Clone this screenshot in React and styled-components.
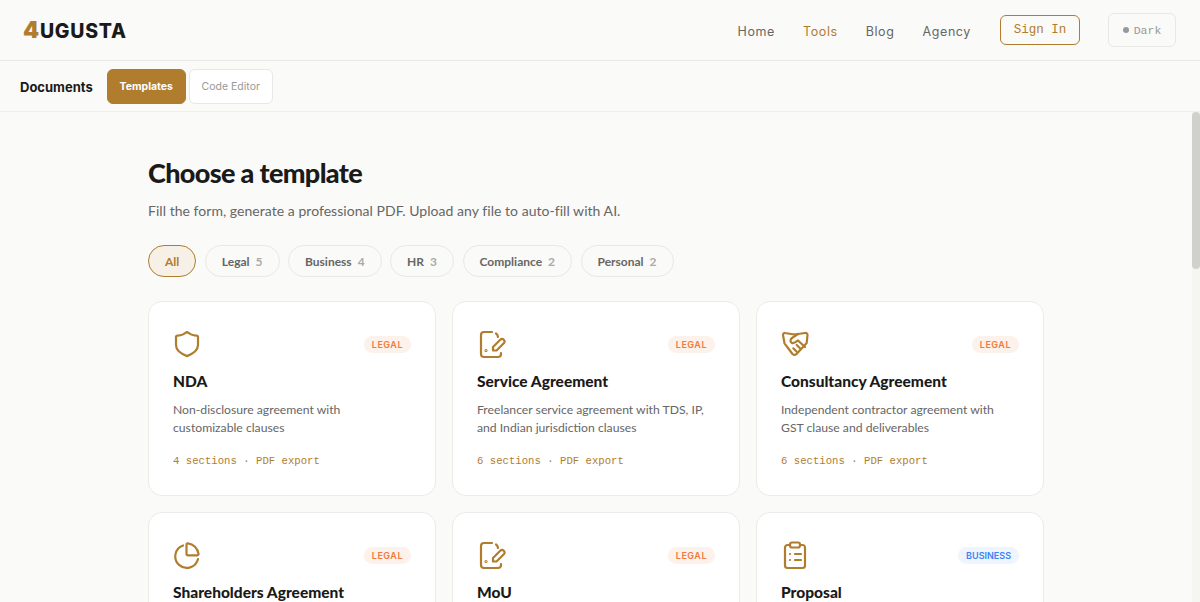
import styled, { createGlobalStyle } from "styled-components";

const accent = "#b07d2e";

const GlobalStyle = createGlobalStyle`
  html, body {
    margin: 0;
    height: 100%;
    overflow: hidden;
    background: #fafaf8;
  }
  * {
    box-sizing: border-box;
  }
`;

const Page = styled.div`
  height: 602px;
  display: flex;
  flex-direction: column;
  background: #fafaf8;
  color: #1a1a1a;
  font-family: "Lato", "Liberation Sans", sans-serif;
`;

const Header = styled.header`
  height: 61px;
  flex: none;
  display: flex;
  align-items: center;
  justify-content: space-between;
  padding: 0 24px;
  border-bottom: 1px solid #e8e8e4;
`;

const Logo = styled.div`
  font-family: "Inter", sans-serif;
  font-weight: 800;
  font-size: 19.5px;
  letter-spacing: 0.75px;
  color: #1a1a1a;
  margin-left: -1px;
  span {
    color: ${accent};
    font-size: 23px;
    font-weight: 900;
  }
`;

const Nav = styled.nav`
  display: flex;
  align-items: center;
`;

const NavLink = styled.a`
  font-family: "Inter", sans-serif;
  font-size: 12.5px;
  letter-spacing: 0.6px;
  margin-right: 28px;
  padding-top: 2px;
  color: ${(p) => (p.$active ? accent : "#666")};
`;

const SignIn = styled.button`
  width: 80px;
  height: 30px;
  margin-left: 1px;
  border: 1px solid ${accent};
  border-radius: 6px;
  background: transparent;
  color: ${accent};
  font-family: "Liberation Mono", monospace;
  font-size: 12.5px;
  padding: 0;
`;

const ThemeToggle = styled.button`
  width: 68px;
  height: 34px;
  margin-left: 28px;
  display: flex;
  align-items: center;
  justify-content: center;
  gap: 5px;
  border: 1px solid #e8e8e4;
  border-radius: 6px;
  background: transparent;
  color: #999;
  font-family: "Liberation Mono", monospace;
  font-size: 11.5px;
  padding: 0;
`;

const Dot = styled.i`
  width: 6px;
  height: 6px;
  border-radius: 50%;
  background: #999;
`;

const SubBar = styled.div`
  height: 51px;
  flex: none;
  display: flex;
  align-items: center;
  padding: 0 20px;
  border-bottom: 1px solid #eeeeea;
`;

const SubTitle = styled.div`
  font-family: "Inter", sans-serif;
  font-weight: 700;
  font-size: 13px;
  margin-right: 14px;
  padding-top: 2px;
`;

const Tab = styled.button`
  height: 35px;
  padding: 0;
  width: ${(p) => (p.$active ? "79px" : "84px")};
  margin-right: 3px;
  border-radius: 6px;
  font-family: "Inter", sans-serif;
  font-size: 10.5px;
  font-weight: ${(p) => (p.$active ? 700 : 400)};
  color: ${(p) => (p.$active ? "#fff" : "#999")};
  background: ${(p) => (p.$active ? accent : "#fff")};
  border: 1px solid ${(p) => (p.$active ? accent : "#e8e8e4")};
`;

const Body = styled.div`
  flex: 1;
  min-height: 0;
  display: flex;
`;

const Scroller = styled.main`
  flex: 1;
  overflow: hidden;
`;

const ScrollTrack = styled.div`
  width: 8px;
  flex: none;
  background: #f5f5f2;
`;

const ScrollThumb = styled.div`
  height: 157px;
  background: #d0d0cc;
  border-radius: 4px;
`;

const Content = styled.div`
  width: 896px;
  margin: 0 auto;
  padding-top: 43px;
`;

const Title = styled.h1`
  margin: 0;
  font-size: 27px;
  line-height: 36px;
  font-weight: 900;
  letter-spacing: -0.65px;
  color: #1a1a1a;
`;

const Lead = styled.p`
  margin: 10px 0 0;
  font-size: 14px;
  line-height: 20px;
  letter-spacing: 0.04px;
  color: #666;
`;

const Filters = styled.div`
  display: flex;
  gap: 8.5px;
  margin-top: 24px;
`;

const Chip = styled.button`
  height: 32px;
  padding: 0 16px;
  border-radius: 16px;
  font-family: "Lato", sans-serif;
  font-size: 12px;
  font-weight: 700;
  color: ${(p) => (p.$active ? accent : "#666")};
  background: ${(p) => (p.$active ? "#f6f0e6" : "#fafaf8")};
  border: 1px solid ${(p) => (p.$active ? accent : "#e8e8e4")};
  b {
    margin-left: 6px;
    font-weight: 700;
    color: #aaa;
  }
`;

const Grid = styled.div`
  display: grid;
  grid-template-columns: repeat(3, 288px);
  gap: 16px;
  margin-top: 24px;
`;

const Card = styled.article`
  height: 195px;
  padding: 24px;
  background: #fff;
  border: 1px solid #ebebe7;
  border-radius: 14px;
`;

const CardTop = styled.div`
  display: flex;
  align-items: center;
  justify-content: space-between;
  height: 36px;
`;

const IconWrap = styled.div`
  width: 30px;
  height: 30px;
  margin-left: -1px;
  color: ${accent};
`;

const Badge = styled.span`
  height: 17px;
  padding: 0 8px;
  display: flex;
  align-items: center;
  border-radius: 9px;
  font-family: "Inter", sans-serif;
  font-size: 9px;
  font-weight: 600;
  letter-spacing: ${(p) => (p.$kind === "BUSINESS" ? "0" : "0.5px")};
  color: ${(p) => (p.$kind === "BUSINESS" ? "#3b82f6" : "#f07a3a")};
  background: ${(p) => (p.$kind === "BUSINESS" ? "#eef5fe" : "#fdf1ec")};
`;

const CardTitle = styled.h3`
  margin: 9px 0 0;
  font-size: 15.5px;
  line-height: 20px;
  font-weight: 900;
  color: #1a1a1a;
`;

const CardText = styled.p`
  margin: 10px 0 0;
  font-size: 12.2px;
  line-height: 18px;
  color: #666;
`;

const Meta = styled.div`
  margin-top: 17px;
  font-family: "Liberation Mono", monospace;
  font-size: 10.65px;
  line-height: 14px;
  color: ${accent};
`;

const Svg = ({ children }) => (
  <svg
    width="30"
    height="30"
    viewBox="0 0 30 30"
    fill="none"
    stroke="currentColor"
    strokeWidth="2.2"
    strokeLinecap="round"
    strokeLinejoin="round"
  >
    {children}
  </svg>
);

const ShieldIcon = () => (
  <Svg>
    <path d="M15 3l4 2.4c1.6.9 3.4 1.3 5.5 1.3.8 0 1.5.6 1.5 1.4v8c0 5-4.5 8.5-11 11-6.5-2.5-11-6-11-11v-8c0-.8.7-1.4 1.5-1.4 2.1 0 3.9-.4 5.5-1.3z" />
  </Svg>
);

const DocPenIcon = () => (
  <Svg>
    <path d="M16 3H8a3 3 0 0 0-3 3v19a3 3 0 0 0 3 3h14a3 3 0 0 0 3-3v-1" />
    <path d="M20 4.5c1.2.8 1.8 1.8 2 3.5" />
    <path d="M17 21.5V18l7.5-7.5a2.5 2.5 0 0 1 3.5 3.5l-7.5 7.5z" />
    <circle cx="10" cy="21.5" r=".5" />
  </Svg>
);

const HandshakeIcon = () => (
  <Svg>
    <path d="M5 4l6 1c2 .4 4 .4 7 0l7-1c1.5-.2 2.5.5 2.5 2l-.8 8L17 24.5c-1.5 1.8-3 1.8-4.500.5L4.500 14.300 3 6C3 4.800 4 3.800 5 4z" />
    <path d="M18 5l-6 4c-2 1.500-2 4 0 5 2 .8 4-1 6-2.500l7 6.500" />
    <path d="M13.300 19.300l3.400 3.400M16.700 16l3.300 3.300" />
  </Svg>
);

const PieIcon = () => (
  <Svg>
    <path d="M11 5.500A11.500 11.500 0 1 0 26 19" />
    <path d="M14.500 4.500c0-.8.6-1.300 1.400-1.200 5.600.7 9.800 5 10.600 10.600.1.800-.4 1.400-1.200 1.400h-9.300c-.8 0-1.500-.7-1.500-1.500z" />
  </Svg>
);

const ClipboardIcon = () => (
  <Svg>
    <rect x="10" y="2.500" width="10" height="5" rx="2" />
    <path d="M10 5H7.500A2.500 2.500 0 0 0 5 7.500v18A2.500 2.500 0 0 0 7.500 28h15a2.500 2.500 0 0 0 2.500-2.500v-18A2.500 2.500 0 0 0 22.500 5H20" />
    <path d="M15 14h6M15 20h6M10 14h.01M10 20h.01" />
  </Svg>
);

const filters = [
  { label: "All", active: true },
  { label: "Legal", count: 5 },
  { label: "Business", count: 4 },
  { label: "HR", count: 3 },
  { label: "Compliance", count: 2 },
  { label: "Personal", count: 2 },
];

const templates = [
  {
    title: "NDA",
    text: ["Non-disclosure agreement with", "customizable clauses"],
    sections: 4,
    kind: "LEGAL",
    icon: <ShieldIcon />,
  },
  {
    title: "Service Agreement",
    text: ["Freelancer service agreement with TDS, IP,", "and Indian jurisdiction clauses"],
    sections: 6,
    kind: "LEGAL",
    icon: <DocPenIcon />,
  },
  {
    title: "Consultancy Agreement",
    text: ["Independent contractor agreement with", "GST clause and deliverables"],
    sections: 6,
    kind: "LEGAL",
    icon: <HandshakeIcon />,
  },
  { title: "Shareholders Agreement", kind: "LEGAL", icon: <PieIcon /> },
  { title: "MoU", kind: "LEGAL", icon: <DocPenIcon /> },
  { title: "Proposal", kind: "BUSINESS", icon: <ClipboardIcon /> },
];

const App = () => (
  <>
    <GlobalStyle />
    <Page>
      <Header>
        <Logo>
          <span>4</span>UGUSTA
        </Logo>
        <Nav>
          <NavLink>Home</NavLink>
          <NavLink $active>Tools</NavLink>
          <NavLink>Blog</NavLink>
          <NavLink>Agency</NavLink>
          <SignIn>Sign In</SignIn>
          <ThemeToggle>
            <Dot />
            Dark
          </ThemeToggle>
        </Nav>
      </Header>
      <SubBar>
        <SubTitle>Documents</SubTitle>
        <Tab $active>Templates</Tab>
        <Tab>Code Editor</Tab>
      </SubBar>
      <Body>
        <Scroller>
          <Content>
            <Title>Choose a template</Title>
            <Lead>Fill the form, generate a professional PDF. Upload any file to auto-fill with AI.</Lead>
            <Filters>
              {filters.map((f) => (
                <Chip key={f.label} $active={f.active}>
                  {f.label}
                  {f.count && <b>{f.count}</b>}
                </Chip>
              ))}
            </Filters>
            <Grid>
              {templates.map((t) => (
                <Card key={t.title}>
                  <CardTop>
                    <IconWrap>{t.icon}</IconWrap>
                    <Badge $kind={t.kind}>{t.kind}</Badge>
                  </CardTop>
                  <CardTitle>{t.title}</CardTitle>
                  {t.text && (
                    <CardText>
                      {t.text[0]}
                      <br />
                      {t.text[1]}
                    </CardText>
                  )}
                  {t.sections && <Meta>{t.sections} sections · PDF export</Meta>}
                </Card>
              ))}
            </Grid>
          </Content>
        </Scroller>
        <ScrollTrack>
          <ScrollThumb />
        </ScrollTrack>
      </Body>
    </Page>
  </>
);

export default App;
